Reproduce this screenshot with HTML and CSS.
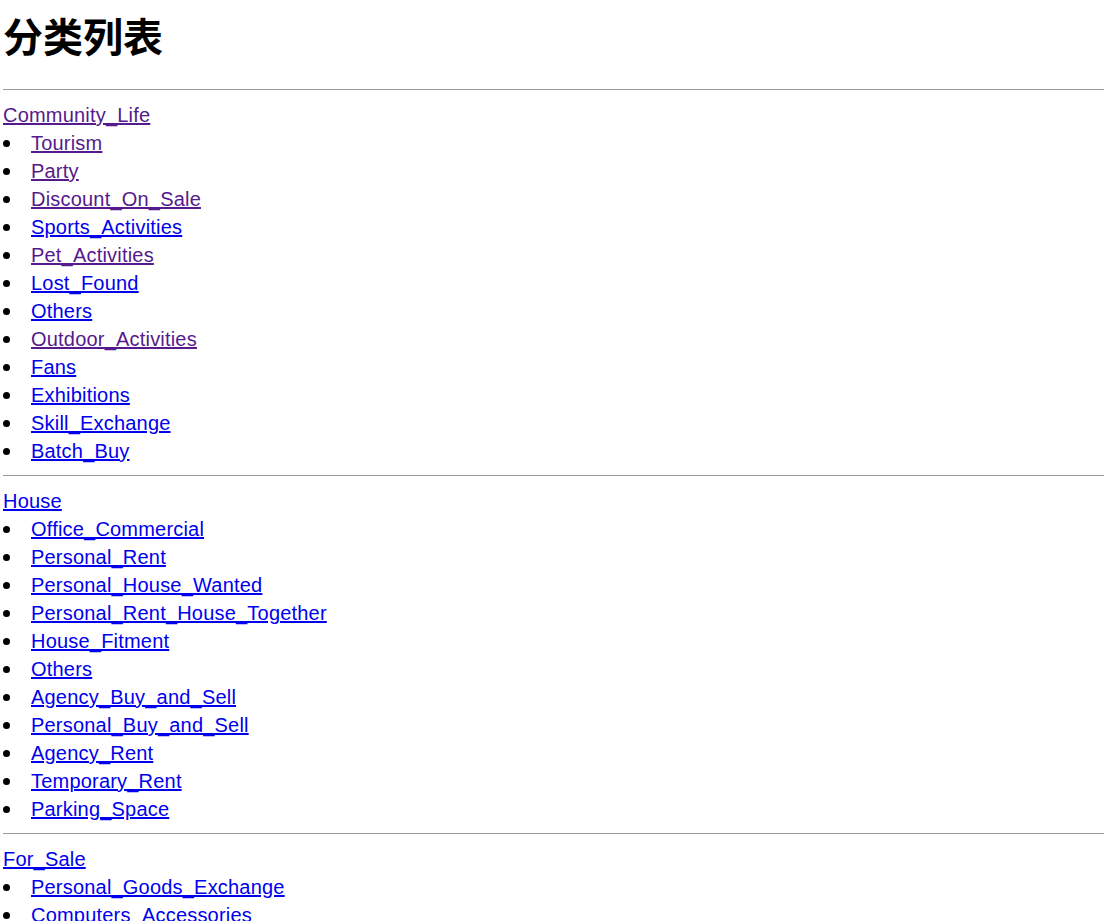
FILE: index.html
```html
<!DOCTYPE html>
<html lang="zh-CN">
<head>
<meta charset="utf-8">
<title>分类列表</title>
<link rel="stylesheet" href="styles.css">
</head>
<body>
<h1 class="title">分类列表</h1>

<hr class="sep">
<a class="cat visited" href="#">Community_Life</a>
<ul class="items">
  <li><a class="visited" href="#">Tourism</a></li>
  <li><a class="visited" href="#">Party</a></li>
  <li><a class="visited" href="#">Discount_On_Sale</a></li>
  <li><a href="#">Sports_Activities</a></li>
  <li><a class="visited" href="#">Pet_Activities</a></li>
  <li><a href="#">Lost_Found</a></li>
  <li><a href="#">Others</a></li>
  <li><a class="visited" href="#">Outdoor_Activities</a></li>
  <li><a href="#">Fans</a></li>
  <li><a href="#">Exhibitions</a></li>
  <li><a href="#">Skill_Exchange</a></li>
  <li><a href="#">Batch_Buy</a></li>
</ul>

<hr class="sep">
<a class="cat" href="#">House</a>
<ul class="items">
  <li><a href="#">Office_Commercial</a></li>
  <li><a href="#">Personal_Rent</a></li>
  <li><a href="#">Personal_House_Wanted</a></li>
  <li><a href="#">Personal_Rent_House_Together</a></li>
  <li><a href="#">House_Fitment</a></li>
  <li><a href="#">Others</a></li>
  <li><a href="#">Agency_Buy_and_Sell</a></li>
  <li><a href="#">Personal_Buy_and_Sell</a></li>
  <li><a href="#">Agency_Rent</a></li>
  <li><a href="#">Temporary_Rent</a></li>
  <li><a href="#">Parking_Space</a></li>
</ul>

<hr class="sep">
<a class="cat" href="#">For_Sale</a>
<ul class="items">
  <li><a href="#">Personal_Goods_Exchange</a></li>
  <li><a href="#">Computers_Accessories</a></li>
</ul>
</body>
</html>
```

FILE: styles.css
```css
html, body {
  background: #fff;
}
body {
  margin: 0 0 0 3px;
  font-family: "Liberation Sans", "Noto Sans CJK SC", sans-serif;
  font-size: 20px;
  line-height: 28px;
  letter-spacing: 0.2px;
  color: #000;
}
.title {
  margin: 0 0 19px 0;
  font-family: "Noto Sans CJK SC", sans-serif;
  font-size: 40px;
  line-height: 70px;
  letter-spacing: 0;
  font-weight: bold;
}
.sep {
  margin: 10px 0 11px 0;
  border: 0;
  border-top: 1px solid #999;
  height: 0;
}
a {
  color: #0000ee;
  text-decoration: underline;
}
a.visited {
  color: #551a8b;
}
.cat {
  display: block;
  width: max-content;
}
.items {
  margin: 0;
  padding: 0;
  list-style: none;
}
.items li {
  display: flex;
  align-items: center;
}
.items li::before {
  content: "";
  width: 7px;
  height: 7px;
  border-radius: 50%;
  background: #000;
  margin: 0 21px 0 0;
  flex: none;
}
```
